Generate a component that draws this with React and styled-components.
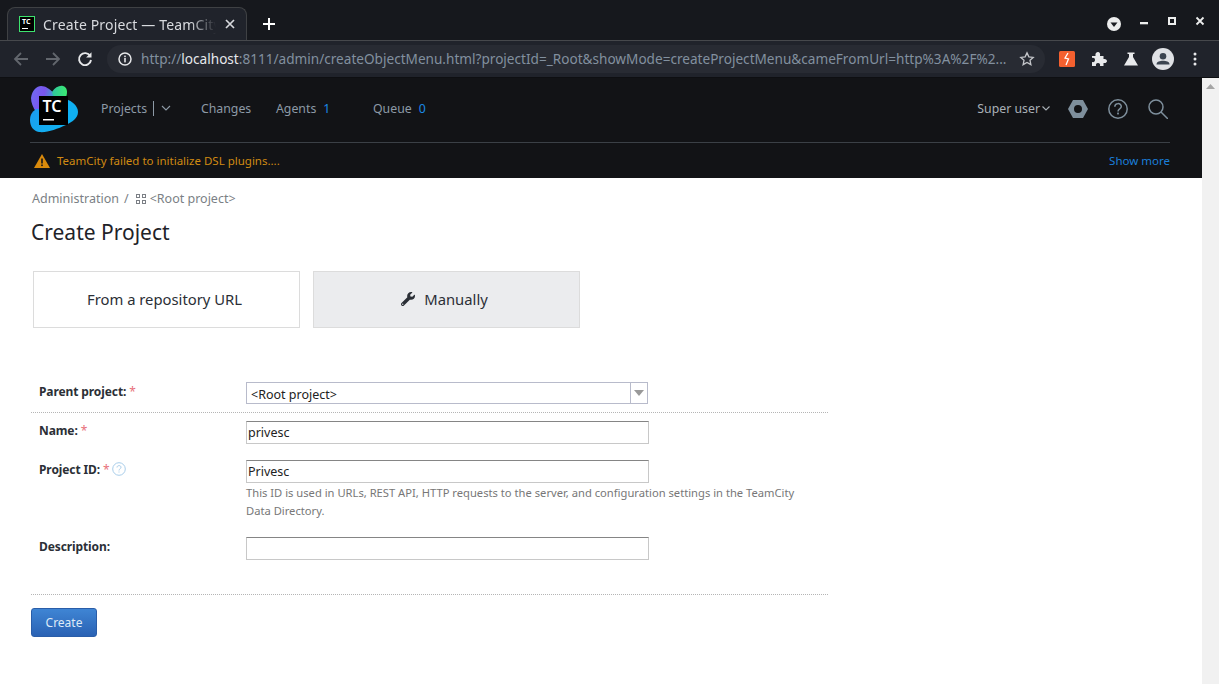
import React from 'react';
import styled, { createGlobalStyle } from 'styled-components';
import { FaWrench } from 'react-icons/fa';

const GlobalStyle = createGlobalStyle`
    html, body {
        margin: 0;
        padding: 0;
        background: #fff;
        overflow: hidden;
    }
    * {
        box-sizing: border-box;
    }
`;

const Logo = () => (
    <svg width="50" height="50" viewBox="0 0 50 50">
        <defs>
            <linearGradient id="tcA" x1="0" y1="0" x2="1" y2="0.3">
                <stop offset="0" stopColor="#6f6cf2" />
                <stop offset="0.6" stopColor="#7a55ee" />
                <stop offset="1" stopColor="#3fa0c8" />
            </linearGradient>
            <linearGradient id="tcB" x1="0" y1="0" x2="1" y2="0">
                <stop offset="0" stopColor="#2fc4a0" />
                <stop offset="1" stopColor="#3bea70" />
            </linearGradient>
            <linearGradient id="tcC" x1="0" y1="0" x2="1" y2="1">
                <stop offset="0" stopColor="#1b9cf0" />
                <stop offset="1" stopColor="#0fb4f0" />
            </linearGradient>
        </defs>
        <path d="M1 13C2 5 7 1 11 1C16 1 19 4 23 7L24 20L6 27C3 22 1 18 1 13Z" fill="url(#tcA)" />
        <path d="M22 7C25 2 30 0 33 1C37 2 38 7 36 12L24 14Z" fill="url(#tcB)" />
        <path d="M0 35C0 30 2 27 6 24L30 26L36 40C27 44 17 48 9 47C3 46 0 41 0 35Z" fill="url(#tcC)" />
        <path d="M36 14C42 16 48 21 48 27C48 33 42 37 36 40Z" fill="#0fb0f2" />
        <rect x="9" y="11" width="29" height="29" fill="#000" />
        <text x="12.500" y="27" fill="#fff" fontFamily="'Noto Sans', sans-serif" fontWeight="600" fontSize="16">TC</text>
        <rect x="13" y="34" width="11" height="1.500" fill="#fff" />
    </svg>
);

export default () => {
    return (
        <>
            <GlobalStyle />
            <Window>
                <TitleBar>
                    <Tab>
                        <Favicon>
                            <FaviconText>TC</FaviconText>
                            <FaviconLine />
                        </Favicon>
                        <TabTitle>Create Project — TeamCity</TabTitle>
                        <TabClose>
                            <svg width="10" height="10" viewBox="0 0 10 10">
                                <path d="M1 1L9 9M9 1L1 9" stroke="#d6d8dc" strokeWidth="1.7" />
                            </svg>
                        </TabClose>
                    </Tab>
                    <NewTab>
                        <svg width="14" height="14" viewBox="0 0 14 14">
                            <path d="M7 1V13M1 7H13" stroke="#fff" strokeWidth="2" />
                        </svg>
                    </NewTab>
                    <WindowControls>
                        <ProfileDrop>
                            <svg width="14" height="14" viewBox="0 0 14 14">
                                <circle cx="7" cy="7" r="7" fill="#eceded" />
                                <path d="M3.500 5.500H10.500L7 10Z" fill="#1b1d22" />
                            </svg>
                        </ProfileDrop>
                        <WinButton>
                            <svg width="10" height="10" viewBox="0 0 10 10">
                                <rect x="1" y="6" width="8" height="2.300" fill="#eceded" />
                            </svg>
                        </WinButton>
                        <WinButton>
                            <svg width="10" height="10" viewBox="0 0 10 10">
                                <rect x="2" y="2" width="6" height="6" fill="none" stroke="#eceded" strokeWidth="2" />
                            </svg>
                        </WinButton>
                        <WinButton>
                            <svg width="10" height="10" viewBox="0 0 10 10">
                                <path d="M1.500 1.500L8.500 8.500M8.500 1.500L1.500 8.500" stroke="#eceded" strokeWidth="1.800" />
                            </svg>
                        </WinButton>
                    </WindowControls>
                </TitleBar>
                <Toolbar>
                    <NavButton>
                        <svg width="16" height="16" viewBox="0 0 16 16">
                            <path d="M15 8H2M8 2L2 8L8 14" fill="none" stroke="#62666d" strokeWidth="1.800" />
                        </svg>
                    </NavButton>
                    <NavButton>
                        <svg width="16" height="16" viewBox="0 0 16 16">
                            <path d="M1 8H14M8 2L14 8L8 14" fill="none" stroke="#62666d" strokeWidth="1.800" />
                        </svg>
                    </NavButton>
                    <NavButton>
                        <svg width="16" height="16" viewBox="0 0 16 16">
                            <path d="M13.200 5A6 6 0 1 0 14 9" fill="none" stroke="#e6e7e9" strokeWidth="1.900" />
                            <path d="M14.500 1.200V6.600H9.100Z" fill="#e6e7e9" />
                        </svg>
                    </NavButton>
                    <Omnibox>
                        <svg width="14" height="14" viewBox="0 0 14 14">
                            <circle cx="7" cy="7" r="6" fill="none" stroke="#e6e7e9" strokeWidth="1.500" />
                            <rect x="6.200" y="6" width="1.600" height="4.400" fill="#e6e7e9" />
                            <rect x="6.200" y="3.600" width="1.600" height="1.600" fill="#e6e7e9" />
                        </svg>
                        <Url>
                            http://<UrlHost>localhost</UrlHost>:8111/admin/createObjectMenu.html?projectId=_Root&amp;showMode=createProjectMenu&amp;cameFromUrl=http%3A%2F%2...
                        </Url>
                        <svg width="16" height="16" viewBox="0 0 24 24">
                            <path d="M12 2.800l2.800 6 6.500.8-4.800 4.400 1.300 6.500L12 17.200l-5.800 3.300 1.300-6.500L2.700 9.600l6.500-.8z" fill="none" stroke="#c4c6ca" strokeWidth="2" />
                        </svg>
                    </Omnibox>
                    <Extensions>
                        <ExtIcon>
                            <svg width="16" height="16" viewBox="0 0 16 16">
                                <rect width="16" height="16" rx="1.500" fill="#f4602f" />
                                <path d="M9 2L6 7L9.500 8L7 14" fill="none" stroke="#fff" strokeWidth="1.300" />
                            </svg>
                        </ExtIcon>
                        <ExtIcon>
                            <svg width="16" height="16" viewBox="0 0 16 16">
                                <path d="M1 5H4.500C4 2 5.500 1 7 1S9.500 2 9 5H12.500V8C15 7.500 16 9 16 10S15 12.500 12.500 12V15H9C9.500 13 8.500 12 7 12S4.500 13 5 15H1V11C3 11.500 4 10.500 4 9S3 6.500 1 7Z" fill="#e8e9eb" />
                            </svg>
                        </ExtIcon>
                        <ExtIcon>
                            <svg width="16" height="16" viewBox="0 0 16 16">
                                <path d="M4.500 1.500H11.500V3H10V6L15 14.500H1L6 6V3H4.500Z" fill="#e8e9eb" />
                            </svg>
                        </ExtIcon>
                        <ExtIcon>
                            <svg width="22" height="22" viewBox="0 0 22 22">
                                <circle cx="11" cy="11" r="11" fill="#dfe1e5" />
                                <circle cx="11" cy="8.300" r="3.300" fill="#3b4450" />
                                <path d="M4.500 16.500C4.500 13.500 8 12.800 11 12.800S17.500 13.500 17.500 16.500Z" fill="#3b4450" />
                            </svg>
                        </ExtIcon>
                        <ExtIcon>
                            <svg width="4" height="16" viewBox="0 0 4 16">
                                <circle cx="2" cy="3" r="1.500" fill="#e8e9eb" />
                                <circle cx="2" cy="8" r="1.500" fill="#e8e9eb" />
                                <circle cx="2" cy="13" r="1.500" fill="#e8e9eb" />
                            </svg>
                        </ExtIcon>
                    </Extensions>
                </Toolbar>
                <Viewport>
                    <Page>
                        <Header>
                            <TopNav>
                                <LogoWrap><Logo /></LogoWrap>
                                <NavLink $w={100}>
                                    Projects
                                    <NavSep />
                                    <svg width="10" height="6" viewBox="0 0 10 6">
                                        <path d="M1 1L5 5L9 1" fill="none" stroke="#8d9aa6" strokeWidth="1.100" />
                                    </svg>
                                </NavLink>
                                <NavLink $w={75}>Changes</NavLink>
                                <NavLink $w={97}>Agents <Count>1</Count></NavLink>
                                <NavLink $w={60}>Queue <Count>0</Count></NavLink>
                                <UserArea>
                                    <UserName>
                                        Super user
                                        <svg width="8" height="5" viewBox="0 0 8 5">
                                            <path d="M0.500 0.500L4 4L7.500 0.500" fill="none" stroke="#a9b0b6" strokeWidth="1.100" />
                                        </svg>
                                    </UserName>
                                    <svg width="20" height="20" viewBox="0 0 20 20">
                                        <path fillRule="evenodd" d="M5 1H15L20 10L15 19H5L0 10ZM10 6A4 4 0 1 0 10 14A4 4 0 1 0 10 6Z" fill="#7e8f9c" />
                                    </svg>
                                    <svg width="20" height="20" viewBox="0 0 20 20">
                                        <circle cx="10" cy="10" r="9.200" fill="none" stroke="#7e8f9c" strokeWidth="1.500" />
                                        <path d="M6.800 7.800C6.800 3.600 13.300 3.600 13.300 7.600C13.300 10 10 9.800 10 12.400" fill="none" stroke="#7e8f9c" strokeWidth="1.500" />
                                        <rect x="9.100" y="13.600" width="1.800" height="1.800" fill="#7e8f9c" />
                                    </svg>
                                    <svg width="20" height="20" viewBox="0 0 20 20">
                                        <circle cx="8" cy="8" r="7" fill="none" stroke="#7e8f9c" strokeWidth="1.500" />
                                        <path d="M13 13L20 20" stroke="#7e8f9c" strokeWidth="1.500" />
                                    </svg>
                                </UserArea>
                            </TopNav>
                            <Notice>
                                <NoticeText>
                                    <svg width="16" height="14" viewBox="0 0 16 14">
                                        <path d="M8 0L16 14H0Z" fill="#d98a0c" />
                                        <rect x="7.200" y="4.500" width="1.600" height="5" fill="#14161a" />
                                        <rect x="7.200" y="10.500" width="1.600" height="1.600" fill="#14161a" />
                                    </svg>
                                    TeamCity failed to initialize DSL plugins....
                                </NoticeText>
                                <ShowMore>Show more</ShowMore>
                            </Notice>
                        </Header>
                        <Content>
                            <Breadcrumbs>
                                Administration
                                <Slash>/</Slash>
                                <svg width="10" height="10" viewBox="0 0 10 10">
                                    <g fill="none" stroke="#7b7f85" strokeWidth="1">
                                        <rect x="0.500" y="0.500" width="3" height="3" />
                                        <rect x="6.500" y="0.500" width="3" height="3" />
                                        <rect x="0.500" y="6.500" width="3" height="3" />
                                        <rect x="6.500" y="6.500" width="3" height="3" />
                                    </g>
                                </svg>
                                <RootCrumb>&lt;Root project&gt;</RootCrumb>
                            </Breadcrumbs>
                            <Title>Create Project</Title>
                            <Choices>
                                <Choice>From a repository URL</Choice>
                                <Choice $active>
                                    <FaWrench size={14} color="#2b2f36" />
                                    Manually
                                </Choice>
                            </Choices>
                            <Form>
                                <ParentRow>
                                    <Label>Parent project:<Star>*</Star></Label>
                                    <SelectBox>
                                        <SelectValue>&lt;Root project&gt;</SelectValue>
                                        <SelectArrow>
                                            <svg width="10" height="6" viewBox="0 0 10 6">
                                                <path d="M0 0H10L5 6Z" fill="#999" />
                                            </svg>
                                        </SelectArrow>
                                    </SelectBox>
                                </ParentRow>
                                <FieldRow $h={39} $pt={8}>
                                    <Label>Name:<Star>*</Star></Label>
                                    <TextInput defaultValue="privesc" />
                                </FieldRow>
                                <FieldRow $h={85} $pt={8}>
                                    <Label>
                                        Project ID:<Star>*</Star>
                                        <HelpIcon>
                                            <svg width="14" height="14" viewBox="0 0 14 14">
                                                <circle cx="7" cy="7" r="6.300" fill="none" stroke="#a8cdea" strokeWidth="1" />
                                                <path d="M5 5.500C5 3 9 3 9 5.300C9 6.800 7 6.800 7 8.500" fill="none" stroke="#a8cdea" strokeWidth="1" />
                                                <rect x="6.500" y="9.500" width="1" height="1" fill="#a8cdea" />
                                            </svg>
                                        </HelpIcon>
                                    </Label>
                                    <FieldColumn>
                                        <TextInput defaultValue="Privesc" />
                                        <Hint>This ID is used in URLs, REST API, HTTP requests to the server, and configuration settings in the TeamCity Data Directory.</Hint>
                                    </FieldColumn>
                                </FieldRow>
                                <FieldRow $h={57} $pt={0}>
                                    <Label>Description:</Label>
                                    <TextInput />
                                </FieldRow>
                            </Form>
                            <Actions>
                                <CreateButton>Create</CreateButton>
                            </Actions>
                        </Content>
                    </Page>
                    <Scrollbar>
                        <svg width="9" height="5" viewBox="0 0 9 5">
                            <path d="M0 5L4.500 0L9 5Z" fill="#a5a5a5" />
                        </svg>
                    </Scrollbar>
                </Viewport>
            </Window>
        </>
    );
};

const Window = styled.div`
    width: 1219px;
    height: 684px;
    display: flex;
    flex-direction: column;
    overflow: hidden;
    font-family: "Noto Sans", sans-serif;
`;

const TitleBar = styled.div`
    height: 40px;
    flex: none;
    display: flex;
    align-items: flex-end;
    padding-left: 7px;
    background: #16181d;
`;

const Tab = styled.div`
    width: 240px;
    height: 33px;
    display: flex;
    align-items: center;
    padding: 0 10px 0 11px;
    gap: 8px;
    border-radius: 8px 8px 0 0;
    border: 1px solid #3f4144;
    border-bottom: 0;
    background: #20232b;
`;

const Favicon = styled.div`
    width: 16px;
    height: 16px;
    flex: none;
    position: relative;
    border: 1px solid #3ee36f;
    background: #000;
`;

const FaviconText = styled.span`
    position: absolute;
    left: 2px;
    top: 0;
    font-size: 7px;
    line-height: 9px;
    font-weight: 700;
    color: #fff;
`;

const FaviconLine = styled.span`
    position: absolute;
    left: 2px;
    bottom: 2px;
    width: 6px;
    height: 1px;
    background: #fff;
`;

const TabTitle = styled.div`
    flex: 1;
    min-width: 0;
    overflow: hidden;
    white-space: nowrap;
    font-size: 14px;
    letter-spacing: 0.15px;
    color: #d8dade;
    -webkit-mask-image: linear-gradient(to right, #000 85%, transparent 100%);
    mask-image: linear-gradient(to right, #000 85%, transparent 100%);
`;

const TabClose = styled.div`
    width: 12px;
    flex: none;
    display: flex;
    align-items: center;
    justify-content: center;
`;

const NewTab = styled.div`
    width: 44px;
    height: 33px;
    display: flex;
    align-items: center;
    justify-content: center;
`;

const WindowControls = styled.div`
    margin-left: auto;
    height: 40px;
    display: flex;
    align-items: center;
    padding: 0 14px 0 0;
    gap: 18px;
`;

const ProfileDrop = styled.div`
    display: flex;
    margin-top: 8px;
`;

const WinButton = styled.div`
    display: flex;
    margin-top: 2px;
`;

const Toolbar = styled.div`
    height: 38px;
    flex: none;
    display: flex;
    align-items: center;
    padding: 0 0 1px 13px;
    border-top: 1px solid #46484c;
    background: #20232b;
    border-bottom: 1px solid #0e0f12;
`;

const NavButton = styled.div`
    width: 32px;
    display: flex;
    align-items: center;
`;

const Omnibox = styled.div`
    width: 938px;
    height: 28px;
    margin-left: -2px;
    padding: 0 10px 0 11px;
    display: flex;
    align-items: center;
    gap: 9px;
    border-radius: 14px;
    background: #282b33;
`;

const Url = styled.div`
    flex: 1;
    min-width: 0;
    overflow: hidden;
    white-space: nowrap;
    font-size: 13.6px;
    color: #82909f;
`;

const UrlHost = styled.span`
    color: #e6e8ec;
`;

const Extensions = styled.div`
    flex: 1;
    display: flex;
    align-items: center;
    padding-left: 6px;
`;

const ExtIcon = styled.div`
    width: 32px;
    display: flex;
    justify-content: center;
    align-items: center;
`;

const Viewport = styled.div`
    flex: 1;
    min-height: 0;
    display: flex;
`;

const Page = styled.div`
    flex: 1;
    min-width: 0;
    background: #fff;
`;

const Scrollbar = styled.div`
    width: 17px;
    flex: none;
    display: flex;
    justify-content: center;
    padding-top: 6px;
    background: #f1f1f1;
`;

const Header = styled.div`
    height: 100px;
    padding: 0 34px 0 30px;
    background: #121316;
`;

const TopNav = styled.div`
    height: 65px;
    display: flex;
    align-items: center;
    padding-bottom: 4px;
    margin-right: -2px;
    border-bottom: 1px solid #3b4046;
    font-size: 12.3px;
`;

const LogoWrap = styled.div`
    width: 71px;
    height: 50px;
    margin-top: 4px;
`;

const NavLink = styled.div`
    width: ${(props) => props.$w}px;
    display: flex;
    align-items: center;
    gap: 4px;
    color: #8d9aa6;
    white-space: nowrap;
`;

const NavSep = styled.span`
    width: 1px;
    height: 15px;
    margin: 0 3px 0 2px;
    background: #8d9aa6;
`;

const Count = styled.span`
    margin-left: 3px;
    color: #1a8ae8;
`;

const UserArea = styled.div`
    margin-left: auto;
    margin-right: 2px;
    margin-top: 2px;
    display: flex;
    align-items: center;
    gap: 20px;
`;

const UserName = styled.div`
    display: flex;
    align-items: center;
    gap: 2px;
    margin: -2px -2px 0 0;
    color: #a9b0b6;
`;

const Notice = styled.div`
    height: 35px;
    display: flex;
    align-items: center;
    justify-content: space-between;
    padding: 0 0 0 4px;
    margin-right: -2px;
    font-size: 11.5px;
`;

const NoticeText = styled.div`
    display: flex;
    align-items: center;
    gap: 7px;
    color: #d08a12;
`;

const ShowMore = styled.div`
    color: #1a7fdb;
`;

const Content = styled.div`
    padding: 12px 0 0 31px;
`;

const Breadcrumbs = styled.div`
    height: 17px;
    display: flex;
    align-items: center;
    padding-left: 1px;
    font-size: 12.5px;
    color: #7b7f85;
`;

const Slash = styled.span`
    margin: 0 7px 0 5px;
`;

const RootCrumb = styled.span`
    margin-left: 4px;
`;

const Title = styled.h1`
    margin: 10px 0 0 0;
    height: 30px;
    font-size: 21px;
    line-height: 30px;
    font-weight: 400;
    color: #1f2328;
`;

const Choices = styled.div`
    display: flex;
    gap: 13px;
    margin: 24px 0 0 2px;
`;

const Choice = styled.div`
    width: 267px;
    height: 57px;
    display: flex;
    align-items: center;
    justify-content: center;
    gap: 9px;
    padding: 0 4px 2px 0;
    border: 1px solid #dcdcdc;
    background: ${(props) => (props.$active ? '#ebecee' : '#fff')};
    font-size: 14.8px;
    color: #2b2f36;
`;

const Form = styled.div`
    width: 797px;
    margin-top: 54px;
`;

const ParentRow = styled.div`
    height: 31px;
    display: flex;
    padding-left: 8px;
    border-bottom: 1px dotted #b5b5b5;
`;

const FieldRow = styled.div`
    height: ${(props) => props.$h}px;
    display: flex;
    padding: ${(props) => props.$pt}px 0 0 8px;
`;

const Label = styled.div`
    width: 207px;
    flex: none;
    display: flex;
    align-items: flex-start;
    padding-top: 1px;
    font-size: 12px;
    line-height: 17px;
    font-weight: 700;
    letter-spacing: -0.1px;
    color: #2b2f36;
`;

const Star = styled.span`
    margin-left: 3px;
    font-weight: 400;
    color: #e8707a;
`;

const HelpIcon = styled.span`
    display: flex;
    margin: 1px 0 0 2px;
`;

const SelectBox = styled.div`
    width: 402px;
    height: 22px;
    display: flex;
    border: 1px solid #b8bbcb;
    background: #fff;
`;

const SelectValue = styled.div`
    flex: 1;
    padding-left: 4px;
    font-size: 12.5px;
    line-height: 23px;
    color: #222;
`;

const SelectArrow = styled.div`
    width: 17px;
    display: flex;
    align-items: center;
    justify-content: center;
    border-left: 1px solid #b8bbcb;
`;

const FieldColumn = styled.div`
    display: flex;
    flex-direction: column;
`;

const TextInput = styled.input`
    width: 403px;
    height: 23px;
    padding: 0 1px 1px 1px;
    border: 1px solid #c8c8c8;
    border-top-color: #858585;
    border-radius: 0;
    outline: none;
    background: #fff;
    font-family: "Noto Sans", sans-serif;
    font-size: 12.5px;
    color: #222;
`;

const Hint = styled.div`
    width: 560px;
    margin-top: 1px;
    font-size: 11.2px;
    line-height: 18px;
    color: #777;
`;

const Actions = styled.div`
    width: 797px;
    padding-top: 13px;
    border-top: 1px dotted #b5b5b5;
`;

const CreateButton = styled.button`
    width: 66px;
    height: 29px;
    padding: 0;
    border: 1px solid #2a5da8;
    border-radius: 3px;
    background: linear-gradient(to bottom, #3f85d4, #2a62b4);
    font-family: "Noto Sans", sans-serif;
    font-size: 12px;
    color: #dfeaf7;
`;
